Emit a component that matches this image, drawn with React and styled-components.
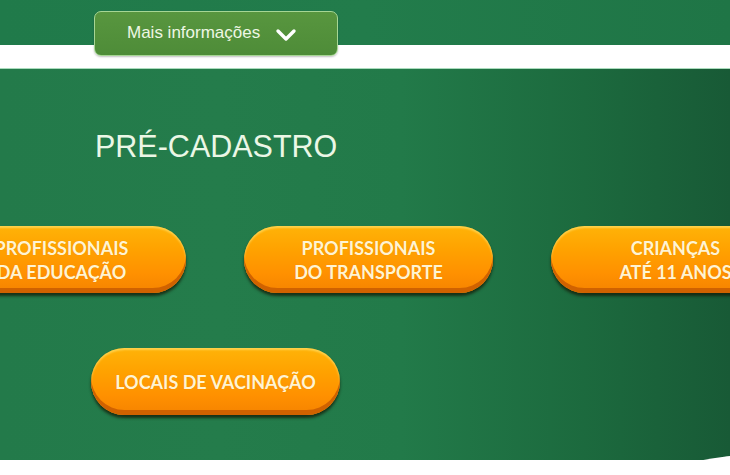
import React from 'react';
import styled, { createGlobalStyle } from 'styled-components';

const GlobalStyle = createGlobalStyle`
  html, body {
    margin: 0;
    padding: 0;
    background: #ffffff;
    overflow: hidden;
  }
  body {
    font-family: "Liberation Sans", Arial, sans-serif;
  }
`;

const rows = [
  {
    offset: -63,
    items: [
      ['PROFISSIONAIS', 'DA EDUCAÇÃO'],
      ['PROFISSIONAIS', 'DO TRANSPORTE'],
      ['CRIANÇAS', 'ATÉ 11 ANOS'],
    ],
  },
  {
    offset: 91,
    items: [['LOCAIS DE VACINAÇÃO']],
  },
];

const App = () => {
  return (
    <Page>
      <GlobalStyle />
      <TopBar>
        <MoreButton>
          Mais informações
          <svg width="22" height="16" viewBox="0 0 22 16">
            <path
              d="M3 4 L11 12 L19 4"
              fill="none"
              stroke="#ffffff"
              strokeWidth="3.4"
              strokeLinecap="round"
              strokeLinejoin="round"
            />
          </svg>
        </MoreButton>
      </TopBar>
      <Strip />
      <Panel>
        <Title>PRÉ-CADASTRO</Title>
        <Rows>
          {rows.map((row, i) => (
            <Row key={i} $offset={row.offset}>
              {row.items.map((lines, j) => (
                <PillButton key={j}>
                  {lines.map((l) => (
                    <span key={l}>{l}</span>
                  ))}
                </PillButton>
              ))}
            </Row>
          ))}
        </Rows>
      </Panel>
    </Page>
  );
};

export default App;

const Page = styled.div`
  width: 730px;
  height: 475px;
  overflow: hidden;
  background: #ffffff;
`;

const TopBar = styled.header`
  height: 45px;
  background: linear-gradient(90deg, #207a4a 0%, #227c4b 50%, #1f7546 100%);
  display: flex;
  align-items: flex-start;
  padding-left: 94px;
  position: relative;
  z-index: 2;
`;

const MoreButton = styled.button`
  margin-top: 11px;
  width: 244px;
  height: 45px;
  box-sizing: border-box;
  background: linear-gradient(180deg, #58963f 0%, #4e8c38 100%);
  border: 1px solid #a6d694;
  border-radius: 7px;
  box-shadow: 0 1px 2px rgba(0, 0, 0, 0.25);
  color: #eef7e4;
  font-family: "Liberation Sans", Arial, sans-serif;
  font-size: 17px;
  display: flex;
  align-items: center;
  justify-content: flex-start;
  gap: 15px;
  padding: 0 0 1px 32px;
  cursor: pointer;
  svg {
    margin-top: 3px;
  }
`;

const Strip = styled.div`
  height: 23px;
  background: #ffffff;
  border-bottom: 1px solid #a9dcbc;
`;

const Panel = styled.section`
  position: relative;
  height: 391px;
  box-sizing: border-box;
  padding-top: 60px;
  background: linear-gradient(
    90deg,
    #237a4a 0%,
    #247c4b 30%,
    #227a49 55%,
    #1c6a3e 80%,
    #185a36 100%
  );
  &::after {
    content: '';
    position: absolute;
    right: -40px;
    bottom: -30px;
    width: 120px;
    height: 36px;
    background: #ffffff;
    border-radius: 100% 0 0 0 / 100% 0 0 0;
  }
`;

const Title = styled.h1`
  margin: 0 0 63px 95px;
  font-family: "Liberation Sans", Arial, sans-serif;
  font-weight: 400;
  font-size: 30.5px;
  line-height: 34px;
  color: #ebf7e6;
`;

const Rows = styled.div`
  display: flex;
  flex-direction: column;
  gap: 52px;
`;

const Row = styled.div`
  display: flex;
  gap: 58px;
  margin-left: ${(p) => p.$offset}px;
  flex-wrap: nowrap;
`;

const PillButton = styled.button`
  flex: 0 0 249px;
  height: 67px;
  margin-bottom: 3px;
  box-sizing: border-box;
  border: none;
  border-radius: 34px;
  background: linear-gradient(180deg, #ffb308 0%, #ffa200 35%, #ff9000 72%, #f58300 100%);
  box-shadow: inset 0 -5px 0 #d06200, inset 0 2px 2px rgba(255, 230, 120, 0.6),
    0 3px 3px rgba(20, 30, 10, 0.8);
  color: #fff4d2;
  font-family: Lato, "Open Sans", sans-serif;
  font-weight: 700;
  font-size: 18px;
  line-height: 24px;
  display: flex;
  flex-direction: column;
  align-items: center;
  justify-content: center;
  padding: 0;
  text-shadow: 0 0 1px rgba(200, 100, 0, 0.4);
  cursor: pointer;
`;
